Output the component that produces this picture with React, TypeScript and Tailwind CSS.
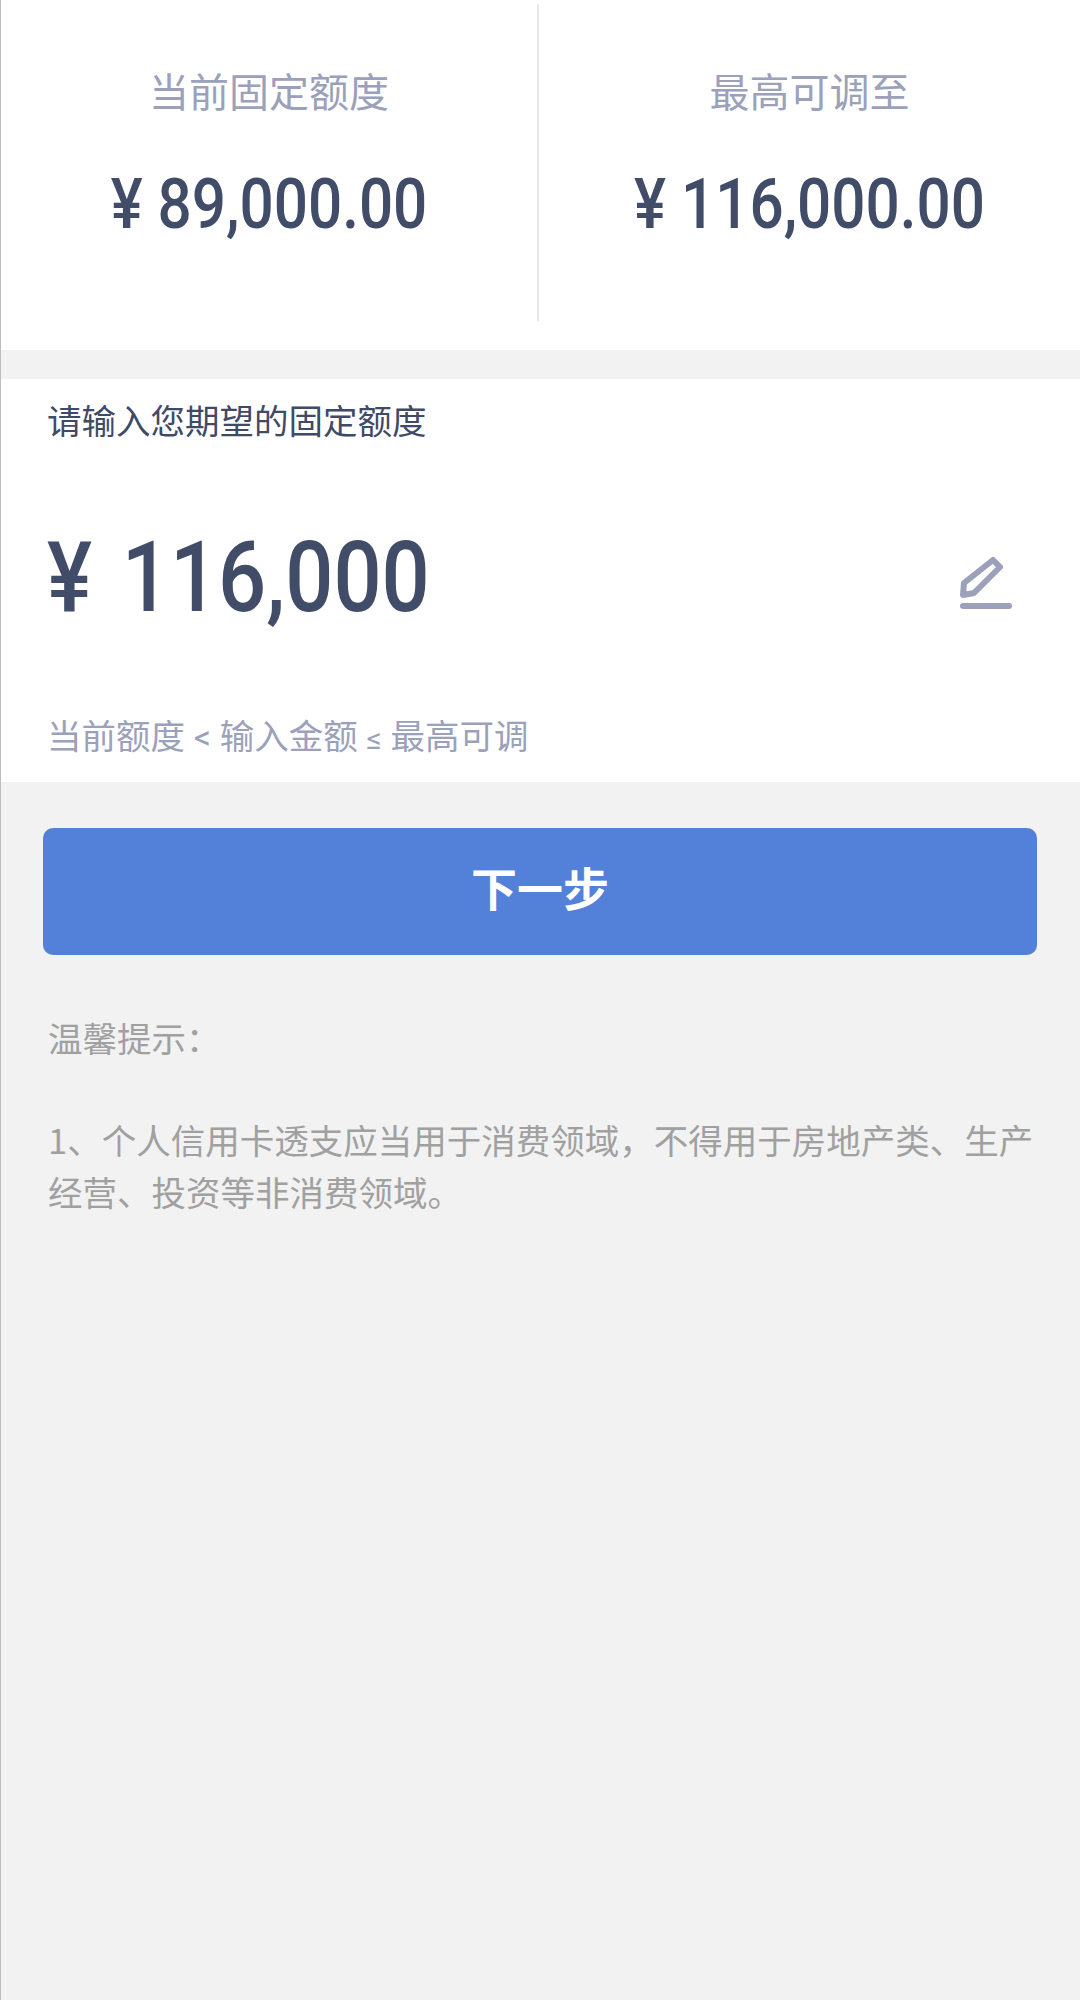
const cjk = "font-['Noto_Sans_CJK_SC','Noto_Sans',sans-serif]";
const num = "font-['Roboto','Liberation_Sans',sans-serif] font-medium";

function Stat({ label, value, cls }: { label: string; value: string; cls: string }) {
  return (
    <div className={cls}>
      <div className="mt-[58px] text-[40px] leading-[56px] text-[#9ba1bb]">{label}</div>
      <div className={`mt-[46px] text-[70px] leading-[80px] text-[#414c68] scale-x-[0.86] ${num}`}>{value}</div>
    </div>
  );
}

export default function App() {
  return (
    <div className={`w-[1080px] min-h-[2000px] bg-[#f2f2f2] border-l border-l-[#bdbdbd] ${cjk}`}>
      <section className="h-[350px] bg-white pt-[4px]">
        <div className="flex h-[317px]">
          <Stat label="当前固定额度" value="¥ 89,000.00" cls="w-[538px] text-center border-r-2 border-r-[#e8e8e8]" />
          <Stat label="最高可调至" value="¥ 116,000.00" cls="flex-1 text-center" />
        </div>
      </section>
      <section className="mt-[29px] h-[403px] bg-white pl-[46px] pr-[68px] flex flex-col">
        <div className="mt-[16px] text-[34.5px] leading-[48px] text-[#3f4a66]">请输入您期望的固定额度</div>
        <div className="mt-[71px] h-[128px] flex items-center justify-between">
          <div className={`text-[98px] leading-[128px] text-[#414c68] origin-left scale-x-[0.865] ${num}`}><span className="mr-[10px]">¥</span> 116,000</div>
          <svg width="52" height="54" viewBox="0 0 52 54" fill="none" className="mt-[10px] text-[#9ba1bb]">
            <path d="M33 4 L40 11 L14 37 L3 39 L4 27 Z" stroke="currentColor" strokeWidth="6" strokeLinejoin="round" />
            <rect x="0" y="47" width="52" height="6" rx="3" fill="currentColor" />
          </svg>
        </div>
        <div className="mt-[68px] text-[34.5px] leading-[48px] text-[#9ba1bb]">当前额度 <span className="mx-[1px] font-['Roboto',sans-serif] text-[34px]">&lt;</span> 输入金额 <span className="mx-[1px] font-['Roboto',sans-serif] text-[30px]">≤</span> 最高可调</div>
      </section>
      <button className="mt-[46px] ml-[42px] block w-[994px] h-[127px] rounded-[10px] bg-[#5380d8] text-white text-[46px] font-bold leading-[58px] pb-[12px] text-center">下一步</button>
      <div className="mt-[56px] pl-[47px] pr-[40px] text-[34.5px] leading-[52px] text-[#a0a0a0]">
        <p>温馨提示：</p>
        <p className="mt-[50px]">1、个人信用卡透支应当用于消费领域，不得用于房地产类、生产经营、投资等非消费领域。</p>
      </div>
    </div>
  );
}
